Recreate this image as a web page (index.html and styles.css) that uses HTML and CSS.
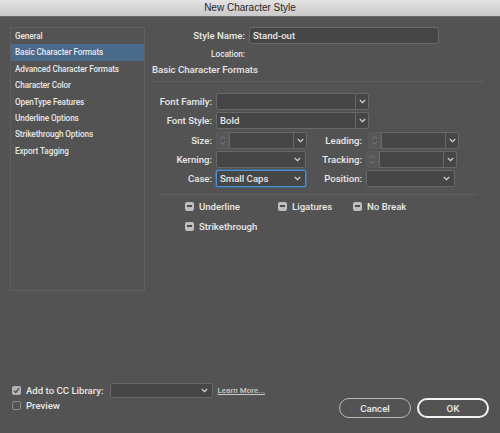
FILE: index.html
```html
<!DOCTYPE html>
<html>
<head>
<meta charset="utf-8">
<title>New Character Style</title>
<link rel="stylesheet" href="styles.css">
</head>
<body>
<div class="window">
  <div class="titlebar">New Character Style</div>
  <div class="main">
    <ul class="nav">
      <li>General</li>
      <li class="active">Basic Character Formats</li>
      <li>Advanced Character Formats</li>
      <li>Character Color</li>
      <li>OpenType Features</li>
      <li>Underline Options</li>
      <li>Strikethrough Options</li>
      <li>Export Tagging</li>
    </ul>
    <div class="content">
      <div class="name-row"><span class="top-label">Style Name:</span><div class="textfield">Stand-out</div></div>
      <div class="loc-row"><span class="top-label small">Location:</span></div>
      <div class="section-title">Basic Character Formats</div>
      <div class="rule"></div>
      <div class="form">
        <span class="flabel">Font Family:</span>
        <div class="select combo wide"><span class="val"></span><span class="arrow"><svg width="7" height="5" viewBox="0 0 7 5"><polyline points="0.8,1 3.5,3.6 6.2,1" fill="none" stroke="#d4d4d4" stroke-width="1.2"/></svg></span></div>

        <span class="flabel">Font Style:</span>
        <div class="select combo wide"><span class="val">Bold</span><span class="arrow"><svg width="7" height="5" viewBox="0 0 7 5"><polyline points="0.8,1 3.5,3.6 6.2,1" fill="none" stroke="#d4d4d4" stroke-width="1.2"/></svg></span></div>

        <span class="flabel">Size:</span>
        <div class="spin"><span class="stepper"><svg width="7" height="11" viewBox="0 0 7 11"><polyline points="1,4 3.5,1.5 6,4" fill="none" stroke="#7a7a7a" stroke-width="1"/><polyline points="1,7 3.5,9.5 6,7" fill="none" stroke="#7a7a7a" stroke-width="1"/></svg></span><div class="select combo"><span class="val"></span><span class="arrow"><svg width="7" height="5" viewBox="0 0 7 5"><polyline points="0.8,1 3.5,3.6 6.2,1" fill="none" stroke="#d4d4d4" stroke-width="1.2"/></svg></span></div></div>

        <span class="flabel">Leading:</span>
        <div class="spin shift"><span class="stepper"><svg width="7" height="11" viewBox="0 0 7 11"><polyline points="1,4 3.5,1.5 6,4" fill="none" stroke="#7a7a7a" stroke-width="1"/><polyline points="1,7 3.5,9.5 6,7" fill="none" stroke="#7a7a7a" stroke-width="1"/></svg></span><div class="select combo"><span class="val"></span><span class="arrow"><svg width="7" height="5" viewBox="0 0 7 5"><polyline points="0.8,1 3.5,3.6 6.2,1" fill="none" stroke="#d4d4d4" stroke-width="1.2"/></svg></span></div></div>

        <span class="flabel">Kerning:</span>
        <div class="select popup"><span class="val"></span><span class="arrow"><svg width="7" height="5" viewBox="0 0 7 5"><polyline points="0.8,1 3.5,3.6 6.2,1" fill="none" stroke="#d4d4d4" stroke-width="1.2"/></svg></span></div>

        <span class="flabel">Tracking:</span>
        <div class="spin"><span class="stepper"><svg width="7" height="11" viewBox="0 0 7 11"><polyline points="1,4 3.5,1.5 6,4" fill="none" stroke="#7a7a7a" stroke-width="1"/><polyline points="1,7 3.5,9.5 6,7" fill="none" stroke="#7a7a7a" stroke-width="1"/></svg></span><div class="select combo"><span class="val"></span><span class="arrow"><svg width="7" height="5" viewBox="0 0 7 5"><polyline points="0.8,1 3.5,3.6 6.2,1" fill="none" stroke="#d4d4d4" stroke-width="1.2"/></svg></span></div></div>

        <span class="flabel">Case:</span>
        <div class="select popup focus"><span class="val">Small Caps</span><span class="arrow"><svg width="7" height="5" viewBox="0 0 7 5"><polyline points="0.8,1 3.5,3.6 6.2,1" fill="none" stroke="#d4d4d4" stroke-width="1.2"/></svg></span></div>

        <span class="flabel">Position:</span>
        <div class="select popup narrow"><span class="val"></span><span class="arrow"><svg width="7" height="5" viewBox="0 0 7 5"><polyline points="0.8,1 3.5,3.6 6.2,1" fill="none" stroke="#d4d4d4" stroke-width="1.2"/></svg></span></div>
      </div>
      <div class="rule inner"></div>
      <div class="checks">
        <div class="chk"><span class="box mixed"></span>Underline</div>
        <div class="chk"><span class="box mixed"></span>Ligatures</div>
        <div class="chk"><span class="box mixed"></span>No Break</div>
        <div class="chk"><span class="box mixed"></span>Strikethrough</div>
      </div>
    </div>
  </div>
  <div class="footer">
    <div class="footer-left">
      <div class="cc-row">
        <span class="box checked"><svg width="9" height="9" viewBox="0 0 9 9"><polyline points="2,4.6 3.8,6.5 7,2.4" fill="none" stroke="#4a4a4a" stroke-width="1.3"/></svg></span>
        <span class="cc-label">Add to CC Library:</span>
        <div class="select popup cc"><span class="val"></span><span class="arrow"><svg width="7" height="5" viewBox="0 0 7 5"><polyline points="0.8,1 3.5,3.6 6.2,1" fill="none" stroke="#d4d4d4" stroke-width="1.2"/></svg></span></div>
        <span class="learn">Learn More...</span>
      </div>
      <div class="preview-row"><span class="box empty"></span>Preview</div>
    </div>
    <div class="buttons">
      <button class="btn">Cancel</button>
      <button class="btn primary">OK</button>
    </div>
  </div>
</div>
</body>
</html>
```

FILE: styles.css
```css
* { box-sizing: border-box; }
html, body { margin: 0; padding: 0; }
body {
  width: 500px;
  height: 433px;
  overflow: hidden;
  background: #535353;
  font-family: Roboto, "Noto Sans", sans-serif;
  font-weight: 500;
  font-size: 9.6px;
  color: #e8e8e8;
}
.window {
  width: 500px;
  height: 433px;
  display: flex;
  flex-direction: column;
  background: #535353;
}
.titlebar {
  flex: none;
  height: 17px;
  background: linear-gradient(#e3e3e3, #c9c9c9);
  border-bottom: 1px solid #6a6a6a;
  text-align: center;
  font-family: "Liberation Sans", Arial, sans-serif;
  font-weight: 400;
  font-size: 10px;
  line-height: 16px;
  color: #262626;
}
.main {
  display: flex;
  gap: 7px;
  padding-left: 10px;
  margin-top: 10px;
}
.nav {
  flex: none;
  list-style: none;
  margin: 0;
  padding: 0;
  width: 135px;
  height: 264px;
  border: 1px solid #5f5f5f;
  font-size: 8.2px;
  letter-spacing: -0.1px;
}
.nav li {
  height: 16.4px;
  line-height: 16.4px;
  padding-left: 4px;
  white-space: nowrap;
}
.nav li.active { background: #4a6a8b; }

.content { width: 333px; }
.name-row { display: flex; align-items: center; height: 17px; }
.top-label {
  width: 93px;
  margin-right: 4px;
  text-align: right;
  white-space: nowrap;
}
.top-label.small { font-size: 8.2px; }
.textfield {
  width: 190px;
  height: 17px;
  border: 1px solid #6a6a6a;
  border-radius: 2px;
  background: #464646;
  padding-left: 3px;
  line-height: 15px;
}
.loc-row { margin-top: 4px; height: 12px; line-height: 12px; display: flex; }
.section-title { margin-top: 4px; line-height: 12px; white-space: nowrap; }
.rule { margin-top: 5px; height: 1px; background: #5f5f5f; }
.rule.inner { margin-top: 7px; margin-left: 7px; width: 318px; }

.form {
  margin-top: 11px;
  display: grid;
  grid-template-columns: 60px 91px 51px 93px;
  grid-auto-rows: 17px;
  column-gap: 4px;
  row-gap: 2.25px;
  align-items: center;
}
.flabel { text-align: right; white-space: nowrap; line-height: 17px; }
.select {
  display: flex;
  height: 17px;
  border: 1px solid #686868;
  border-radius: 2px;
  background: #464646;
}
.select .val { flex: 1; padding-left: 3px; line-height: 15px; white-space: nowrap; overflow: hidden; }
.select .arrow {
  flex: none;
  width: 13px;
  display: flex;
  align-items: center;
  justify-content: center;
}
.select.combo .arrow { border-left: 1px solid #686868; }
.select.popup .arrow { width: 15px; }
.select.wide { grid-column: 2 / span 3; width: 153px; }
.select.popup { width: 90px; }
.select.narrow { width: 89px; }
.select.focus { border-color: #4d8fd4; box-shadow: 0 0 0 0.6px #3f7fc0; }

.spin { display: flex; height: 17px; width: 91px; }
.spin.shift { margin-left: 2px; }
.stepper {
  flex: none;
  width: 13px;
  height: 17px;
  background: #575757;
  border: 1px solid #5c5c5c;
  border-radius: 2px 0 0 2px;
  display: flex;
  align-items: center;
  justify-content: center;
}
.spin .select { flex: 1; border-radius: 0 2px 2px 0; }

.checks {
  margin-top: 4px;
  padding-left: 33px;
  display: grid;
  grid-template-columns: 93px 75px auto;
  grid-auto-rows: 14px;
  row-gap: 6px;
}
.chk { display: flex; align-items: center; white-space: nowrap; }
.box {
  flex: none;
  width: 9px;
  height: 9px;
  border-radius: 2px;
  margin-right: 5px;
  display: flex;
  align-items: center;
  justify-content: center;
}
.box.mixed { background: #bdbdbd; }
.box.mixed::after { content: ""; width: 5px; height: 1.6px; background: #4c4c4c; }
.box.checked { background: #b4b4b4; }
.box.empty { border: 1px solid #8c8c8c; }

.footer {
  margin-top: auto;
  display: flex;
  align-items: flex-end;
  justify-content: space-between;
  padding: 0 11px 15px 12px;
}
.footer-left { margin-bottom: 7px; }
.cc-row { display: flex; align-items: center; height: 15px; white-space: nowrap; }
.cc-label { margin-right: 6px; }
.select.cc { width: 103px; height: 15px; }
.select.cc .val { line-height: 13px; }
.learn {
  margin-left: 5px;
  font-size: 8px;
  color: #c8c8c8;
  text-decoration: underline;
}
.preview-row { display: flex; align-items: center; height: 11px; margin-top: 2px; }
.buttons { display: flex; gap: 6px; align-items: center; }
.btn {
  width: 72px;
  height: 20px;
  border-radius: 10px;
  border: 1.5px solid #bababa;
  background: transparent;
  color: #ececec;
  font-family: Roboto, "Noto Sans", sans-serif;
  font-weight: 500;
  font-size: 9.7px;
  padding: 0;
}
.btn.primary { border: 2px solid #f2f2f2; }
```
